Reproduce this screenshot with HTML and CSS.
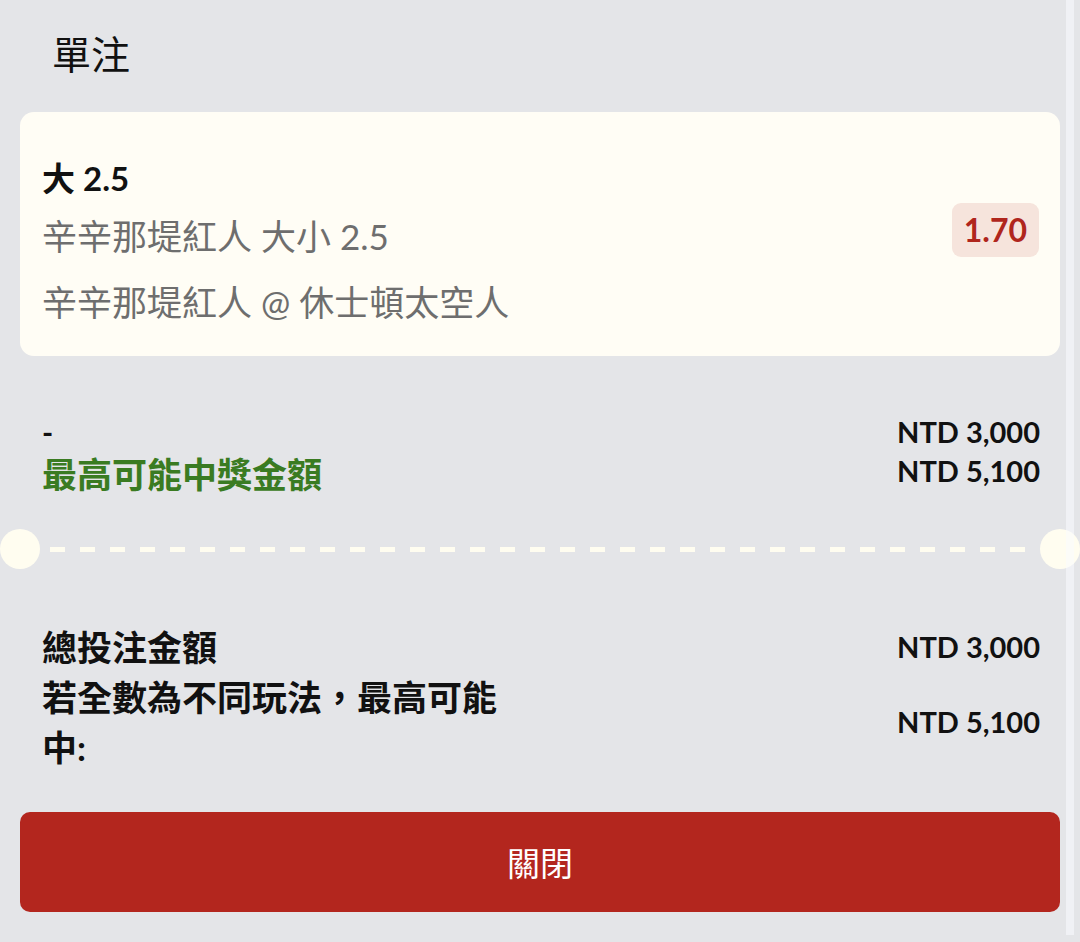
FILE: index.html
```html
<!DOCTYPE html>
<html lang="zh-Hant">
<head>
<meta charset="utf-8">
<title>單注</title>
<link rel="stylesheet" href="styles.css">
</head>
<body>
<div class="sheet">
  <h1 class="title">單注</h1>

  <div class="card">
    <div class="card-info">
      <div class="card-title">大 2.5</div>
      <div class="card-line">辛辛那堤紅人 大小 2.5</div>
      <div class="card-line card-line-last">辛辛那堤紅人 @ 休士頓太空人</div>
    </div>
    <div class="odds">1.70</div>
  </div>

  <div class="stake">
    <div class="stake-labels">
      <div class="stake-dash">-</div>
      <div class="stake-win">最高可能中獎金額</div>
    </div>
    <div class="stake-values">
      <div class="stake-value">NTD 3,000</div>
      <div class="stake-value">NTD 5,100</div>
    </div>
  </div>

  <div class="divider">
    <span class="notch"></span>
    <span class="dashes"></span>
    <span class="notch"></span>
  </div>

  <div class="summary">
    <div class="summary-row">
      <div class="summary-label">總投注金額</div>
      <div class="summary-value">NTD 3,000</div>
    </div>
    <div class="summary-row">
      <div class="summary-label">若全數為不同玩法，最高可能中:</div>
      <div class="summary-value">NTD 5,100</div>
    </div>
  </div>

  <button class="close-btn">關閉</button>
</div>
<div class="rail"></div>
</body>
</html>
```

FILE: styles.css
```css
html, body {
  margin: 0;
  padding: 0;
}
body {
  width: 1080px;
  height: 942px;
  background: #e4e5e8;
  font-family: "Lato", "Noto Sans CJK TC", sans-serif;
  color: #111;
  position: relative;
  overflow: hidden;
}
.sheet {
  display: flex;
  flex-direction: column;
}
.title {
  margin: 0;
  padding: 26px 0 0 52px;
  height: 112px;
  box-sizing: border-box;
  font-size: 39px;
  line-height: 52px;
  font-weight: 400;
  font-family: "Noto Sans CJK TC", sans-serif;
  color: #111;
}
.card {
  margin: 0 20px;
  background: #fffdf5;
  border-radius: 14px;
  padding: 40px 21px 22px 22px;
  display: flex;
  justify-content: space-between;
  align-items: flex-start;
}
.card-info {
  display: flex;
  flex-direction: column;
}
.card-title {
  font-size: 33px;
  line-height: 52px;
  font-weight: 700;
  color: #111;
}
.card-line {
  font-size: 35px;
  line-height: 64px;
  color: #6e6e6e;
}
.card-line-last {
  margin-top: 2px;
}
.odds {
  margin-top: 51px;
  background: #f6e4dc;
  color: #b0261c;
  font-weight: 700;
  font-size: 32px;
  line-height: 54px;
  padding: 0 12px;
  border-radius: 9px;
}
.stake {
  margin: 56px 40px 0 42px;
  display: flex;
  justify-content: space-between;
}
.stake-labels {
  display: flex;
  flex-direction: column;
}
.stake-dash {
  font-size: 30px;
  line-height: 40px;
  font-weight: 700;
}
.stake-win {
  font-size: 35px;
  line-height: 44px;
  font-weight: 700;
  color: #3a7b22;
}
.stake-values {
  display: flex;
  flex-direction: column;
  align-items: flex-end;
}
.stake-value {
  font-size: 29px;
  line-height: 39px;
  font-weight: 700;
}
.divider {
  margin-top: 33px;
  display: flex;
  align-items: center;
  height: 40px;
}
.notch {
  width: 40px;
  height: 40px;
  border-radius: 50%;
  background: #fffdf0;
  flex: none;
}
.dashes {
  flex: 1;
  height: 5px;
  margin: 0 10px;
  background: repeating-linear-gradient(to right, #fffdf0 0 15px, transparent 15px 30px);
}
.summary {
  margin: 53px 40px 0 42px;
  display: flex;
  flex-direction: column;
}
.summary-row {
  display: flex;
  justify-content: space-between;
  align-items: center;
}
.summary-label {
  width: 470px;
  font-size: 35px;
  line-height: 50px;
  font-weight: 700;
}
.summary-value {
  font-size: 29px;
  font-weight: 700;
  line-height: 50px;
}
.close-btn {
  margin: 40px 20px 0 20px;
  height: 100px;
  border: none;
  border-radius: 10px;
  background: #b3261e;
  color: #fff;
  font-family: "Noto Sans CJK TC", sans-serif;
  font-size: 33px;
  font-weight: 400;
  padding: 0;
}
.rail {
  position: absolute;
  top: 0;
  left: 1066px;
  width: 8px;
  height: 935px;
  background: rgba(250, 251, 255, 0.55);
}
```
